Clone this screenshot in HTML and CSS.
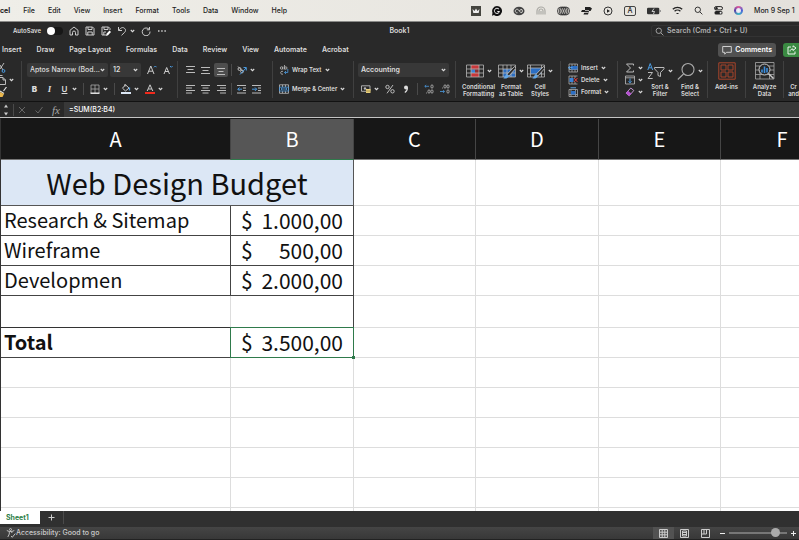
FILE: index.html
```html
<!DOCTYPE html>
<html lang="en">

<head>
    <meta charset="utf-8">
    <title>Book1</title>
    <link rel="stylesheet" href="styles.css">
</head>

<body>
    <!-- shared icons -->
    <svg class="defs" aria-hidden="true">
        <symbol id="chev" viewBox="0 0 5 4"><path d="M.8 1l1.700 1.700L4.200 1" fill="none" stroke="currentColor" stroke-width="1.100" /></symbol>
        <symbol id="lens" viewBox="0 0 10 10"><circle cx="4.200" cy="4.200" r="3" fill="none" stroke="currentColor" /><path d="M6.400 6.400L9.300 9.300" stroke="currentColor" /></symbol>
        <symbol id="brush" viewBox="0 0 18 18"><path d="M16.500 4.500L9 12.300l1.800 1.800L18 6.200z" fill="#2a2a2a" stroke="#ccc" stroke-width=".8" /><path d="M9.200 12.300c-2 .2-2 3-4 4 2.500.8 5.300 0 5.700-2.500z" fill="#63a8e8" /></symbol>
    </svg>

    <header class="menubar">
        <nav class="menus">
            <b>cel</b><a href="#">File</a><a href="#">Edit</a><a href="#">View</a><a href="#">Insert</a><a href="#">Format</a><a href="#">Tools</a><a href="#">Data</a><a href="#">Window</a><a href="#">Help</a>
        </nav>
        <div class="tray">
            <svg width="10" height="10" viewBox="0 0 10 10"><path d="M0 0h10v10H0z" fill="#45453f" /><path d="M1.500 3l2 2L5 2.500 6.500 5l2-2-.8 4H2.300z" fill="#eee" /></svg>
            <svg width="10" height="10" viewBox="0 0 10 10"><path d="M5 0a5 5 0 1 1-3 9l-2 .8.5-3A5 5 0 0 1 5 0z" fill="#111" /><path d="M7 3.200A2.600 2.600 0 1 0 7.500 5.500H5.300" fill="none" stroke="#eee" /></svg>
            <svg width="12" height="10" viewBox="0 0 12 10"><ellipse cx="6" cy="5" rx="5.500" ry="4.300" fill="#444" /><path d="M4.500 6.800a1.800 1.800 0 1 1 .7-3.200l2.300 2.800a1.500 1.500 0 1 0 0-2.800L6.500 5" fill="none" stroke="#e9e7e2" stroke-width=".8" /></svg>
            <svg width="10" height="10" viewBox="0 0 10 10"><path d="M1 8.500V5a4 4 0 0 1 8 0v3.500M3 8.500V5a2 2 0 0 1 4 0v3.500M5 5v3.500" fill="none" stroke="#aaa9a4" stroke-width="1.200" /></svg>
            <svg width="13" height="10" viewBox="0 0 13 10" fill="none" stroke="#333" stroke-width=".9"><ellipse cx="4" cy="5" rx="3.500" ry="4" /><ellipse cx="5.700" cy="5" rx="3.500" ry="4" /><ellipse cx="7.300" cy="5" rx="3.500" ry="4" /><ellipse cx="9" cy="5" rx="3.500" ry="4" /></svg>
            <svg width="11" height="10" viewBox="0 0 11 10"><path d="M4 1h5l2 1.500L9.500 5H8L7 8.500H2.500L3.500 6H0l1-2h3z" fill="#222" /><path d="M4 4.500h4M3 6.500h4.500" stroke="#e9e7e2" stroke-width=".7" /></svg>
            <svg width="10" height="10" viewBox="0 0 10 10"><circle cx="5" cy="5" r="4" fill="none" stroke="#333" /><path d="M4 3.200v3.600L7 5z" fill="#222" /></svg>
            <span class="input-lang">A</span>
            <svg width="14" height="8" viewBox="0 0 14 8"><rect x="0" y=".8" width="12.300" height="6.400" rx="1.300" fill="#333" /><path d="M13.200 3v2" stroke="#777" /><path d="M7 1.500L5 4.500h2.500L6.500 7" stroke="#eee" stroke-width=".8" fill="none" /></svg>
            <svg width="11" height="9" viewBox="0 0 11 9" fill="none" stroke="#222" stroke-width="1.300"><path d="M.8 3.300a6.800 6.800 0 0 1 9.400 0M2.600 5.300a4.200 4.200 0 0 1 5.800 0" /><path d="M5.500 7v1" stroke-width="2" /></svg>
            <svg width="9" height="9" class="dark"><use href="#lens" /></svg>
            <svg width="9" height="9" viewBox="0 0 9 9"><rect x=".5" y=".6" width="8" height="3.300" rx="1.600" fill="none" stroke="#222" /><circle cx="2.500" cy="2.200" r="1.200" fill="#222" /><rect x=".5" y="5" width="8" height="3.600" rx="1.600" fill="#222" /><circle cx="6.600" cy="6.800" r="1" fill="#eee" /></svg>
            <span class="siri"></span>
            <span class="clock">Mon 9 Sep 1</span>
        </div>
    </header>

    <div class="titlebar">
        <div class="quick">
            <label for="autosave">AutoSave</label>
            <input type="checkbox" id="autosave" class="toggle">
            <button aria-label="Home"><svg width="10" height="10" viewBox="0 0 10 10"><path d="M1 4.300L5 1l4 3.300V9H6.500V6.500a1.500 1.500 0 0 0-3 0V9H1z" /></svg></button>
            <button aria-label="Save"><svg width="10" height="10" viewBox="0 0 10 10"><path d="M1 1h6.500L9 2.500V9H1zM3 1v2.500h4V1M2.800 9V6h4.400v3" /></svg></button>
            <button aria-label="Save as"><svg width="10" height="10" viewBox="0 0 10 10"><path d="M5 9H1V1h6.500L9 2.500V4M3 1v2.500h4V1M2.800 9V6H5" /><path d="M5 10l.5-2.300L8.500 4.500l1.500 1.500-3 3.300z" fill="#fff" stroke="none" /></svg></button>
            <button aria-label="Undo"><svg width="10" height="10" viewBox="0 0 10 10"><path d="M1.500 1v3.500H5M1.800 4.300C4 1.300 6 1 7.500 2.300s1.300 3-.2 4.400L4.500 9.300" /></svg><svg class="chev"><use href="#chev" /></svg></button>
            <button aria-label="Redo"><svg width="10" height="10" viewBox="0 0 10 10"><path d="M8.500 1v2.800H5.800M8.300 3.600A3.900 3.900 0 1 0 9 5.500" /></svg></button>
            <button aria-label="More"><svg width="10" height="10" viewBox="0 0 10 10"><path d="M1 5h1.500M4.200 5h1.500M7.400 5h1.500" stroke-width="1.400" /></svg></button>
        </div>
        <span class="doc-name">Book1</span>
        <label class="search"><svg width="9" height="9"><use href="#lens" /></svg><input type="text" aria-label="Search" placeholder="Search (Cmd + Ctrl + U)"></label>
    </div>

    <div class="tabs">
        <nav>
            <a href="#">Insert</a><a href="#">Draw</a><a href="#">Page Layout</a><a href="#">Formulas</a><a href="#">Data</a><a href="#">Review</a><a href="#">View</a><a href="#">Automate</a><a href="#">Acrobat</a>
        </nav>
        <div class="tab-actions">
            <button class="comments"><svg width="10" height="10" viewBox="0 0 10 10"><path d="M.7 1.500h8.600v5.800H4.500L2.700 9.200V7.300h-2z" fill="none" stroke="#ddd" stroke-width=".9" /></svg>Comments</button>
            <button class="share" aria-label="Share"><svg width="10" height="10" viewBox="0 0 10 10" fill="none" stroke="#fff" stroke-width=".9"><path d="M4 2H1v7h7V6.500M3 6.500C3 4.500 4.500 4 6 4v1.500L9 3 6 .8v1.500" /></svg></button>
        </div>
    </div>

    <div class="ribbon">
        <div class="group clipboard three">
            <button aria-label="Cut"><svg width="6" height="10" viewBox="0 0 6 10"><path d="M0 6L4 0M0 2l3 5" stroke="#ccc" stroke-width=".9" /><circle cx="3.500" cy="8" r="1.400" fill="none" stroke="#4b9be0" /></svg></button>
            <button aria-label="Copy"><svg width="6" height="10" viewBox="0 0 6 10"><path d="M0 2.500h3L5.500 5v4.500H0M3 2.500V5h2.500M0 .5h2.500" fill="none" stroke="#ccc" stroke-width=".9" /></svg><svg class="chev"><use href="#chev" /></svg></button>
            <button aria-label="Format painter"><svg width="7" height="10" viewBox="0 0 7 10"><path d="M6.500 0L3.500 4M0 4l4 2.500" stroke="#ddd" stroke-width="1.200" /><path d="M0 5l4 2-1.500 3H0z" fill="#e8b64c" /></svg></button>
        </div>

        <div class="group font">
            <div class="row">
                <span class="pick pick-font"><select aria-label="Font"><option>Aptos Narrow (Bod...</option></select><svg class="chev"><use href="#chev" /></svg></span>
                <span class="pick pick-size"><select aria-label="Font size"><option>12</option></select><svg class="chev"><use href="#chev" /></svg></span>
                <button class="grow" aria-label="Increase font size"><svg width="10" height="10" viewBox="0 0 10 10"><path d="M.5 9L3.800 1 7 9M1.700 6.200h4.200" fill="none" stroke="#ccc" /><path d="M7 2.300l1.300-1.300 1.300 1.300" fill="none" stroke="#4b9be0" /></svg></button>
                <button class="grow" aria-label="Decrease font size"><svg width="10" height="10" viewBox="0 0 10 10"><path d="M1 9L3.700 2.500l2.800 6.500M2 6.500h3.500" fill="none" stroke="#ccc" /><path d="M7 1l1.300 1.300L9.600 1" fill="none" stroke="#4b9be0" /></svg></button>
            </div>
            <div class="row styles-row">
                <button class="letter"><b>B</b></button>
                <button class="letter"><i>I</i></button>
                <button class="letter"><u>U</u></button>
                <svg class="chev"><use href="#chev" /></svg>
                <span class="bar"></span>
                <button aria-label="Borders"><svg width="10" height="10" viewBox="0 0 10 10"><path d="M1 1h8v8M1 1v8M5 1v8M1 5h8" fill="none" stroke="#aaa" stroke-width=".8" /><path d="M.5 9.200h9" stroke="#fff" stroke-width="1.300" /></svg><svg class="chev"><use href="#chev" /></svg></button>
                <span class="bar"></span>
                <button aria-label="Fill colour"><svg width="10" height="10" viewBox="0 0 10 10"><path d="M4.500.8L8 4 4.500 7 1.500 4.200zM4 0v2.500" fill="none" stroke="#ddd" stroke-width=".9" /><path d="M8.500 3.500v3" stroke="#4b9be0" stroke-width="1.300" /><path d="M0 8h10v2H0z" fill="#dce7f5" /></svg><svg class="chev"><use href="#chev" /></svg></button>
                <button aria-label="Font colour"><svg width="10" height="10" viewBox="0 0 10 10"><path d="M2.200 7L5 .8 7.800 7M3.200 5h3.600" fill="none" stroke="#ccc" /><path d="M0 8h10v2H0z" fill="#f02a1c" /></svg><svg class="chev"><use href="#chev" /></svg></button>
            </div>
        </div>

        <div class="group align">
            <div class="row">
                <button aria-label="Top align"><svg width="10" height="10" viewBox="0 0 10 10"><path d="M0 1.500h9M1.500 4.500h6M0 7.500h9" /></svg></button>
                <button aria-label="Middle align"><svg width="10" height="10" viewBox="0 0 10 10"><path d="M0 2.500h9M1.500 5.500h6M0 8.500h9" /></svg></button>
                <button class="on" aria-label="Bottom align"><svg width="10" height="10" viewBox="0 0 10 10"><path d="M1 3.500h8M2.500 6.500h5M1 9.500h8" /></svg></button>
                <span class="bar"></span>
                <button aria-label="Orientation"><svg width="10" height="10" viewBox="0 0 10 10"><circle cx="2.500" cy="4" r="1.500" /><circle cx="5" cy="6.500" r="1.400" /><path d="M1 1.500l5 5" /><path d="M3 9.500L9 3M6.500 2.500H9.300V5.500" stroke="#4b9be0" /></svg><svg class="chev"><use href="#chev" /></svg></button>
            </div>
            <div class="row">
                <button aria-label="Align left"><svg width="10" height="10" viewBox="0 0 10 10"><path d="M0 1.500h9M0 4h6M0 6.500h9M0 9h6" /></svg></button>
                <button aria-label="Centre"><svg width="10" height="10" viewBox="0 0 10 10"><path d="M0 1.500h9M1.500 4h6M0 6.500h9M1.500 9h6" /></svg></button>
                <button aria-label="Align right"><svg width="10" height="10" viewBox="0 0 10 10"><path d="M1 1.500h9M4 4h6M1 6.500h9M4 9h6" /></svg></button>
                <span class="bar"></span>
                <button aria-label="Decrease indent"><svg width="10" height="10" viewBox="0 0 10 10"><path d="M0 1.500h9M6 4h3M6 6.500h3M0 9h9" /><path d="M5 5.200H.8M2.500 3.500L.8 5.200l1.700 1.700" stroke="#4b9be0" /></svg></button>
                <button aria-label="Increase indent"><svg width="10" height="10" viewBox="0 0 10 10"><path d="M0 1.500h9M6 4h3M6 6.500h3M0 9h9" /><path d="M0 5.200h4.500M3 3.500l1.700 1.700L3 6.900" stroke="#4b9be0" /></svg></button>
            </div>
        </div>

        <div class="group wrap">
            <div class="row"><button><svg width="10" height="10" viewBox="0 0 10 10" fill="none" stroke="#bbb" stroke-width=".8"><circle cx="2.500" cy="3" r="1.200" /><path d="M3.900 1.500v3M5.500 0v4.500" /><circle cx="6.800" cy="3" r="1.200" /><path d="M4 6.500a1.500 1.500 0 1 0 0 2.500" /><path d="M8.800 4v3.500H5.500M7 6L5.500 7.500 7 9" stroke="#4b9be0" /></svg>Wrap Text<svg class="chev"><use href="#chev" /></svg></button></div>
            <div class="row"><button><svg width="10" height="10" viewBox="0 0 10 10" fill="none" stroke="#bbb" stroke-width=".8"><path d="M.5.8h9v8.500h-9zM3.500.8V3M6.500.8V3M3.500 7.200v2M6.500 7.200v2" /><path d="M.5 3.200h9v3.800h-9zM2 5h6M3.300 4L2 5l1.300 1M6.700 4L8 5 6.700 6" stroke="#4b9be0" /></svg>Merge &amp; Center<svg class="chev"><use href="#chev" /></svg></button></div>
        </div>

        <div class="group number">
            <div class="row"><span class="pick pick-format"><select aria-label="Number format"><option>Accounting</option></select><svg class="chev"><use href="#chev" /></svg></span></div>
            <div class="row number-row">
                <button aria-label="Accounting format"><svg width="10" height="10" viewBox="0 0 10 10"><path d="M.5 1.800h8.500v5.500H.5z" fill="none" stroke="#bbb" stroke-width=".9" /><circle cx="4" cy="4.500" r="1.200" fill="#bbb" /><path d="M5 5h4.500v4H5z" fill="#e8cf7a" /><path d="M5 7h4.500" stroke="#8a7434" stroke-width=".6" /></svg><svg class="chev"><use href="#chev" /></svg></button>
                <button aria-label="Percent"><svg width="10" height="10" viewBox="0 0 10 10" fill="none" stroke="#ccc" stroke-width=".9"><circle cx="2.500" cy="3" r="1.700" /><circle cx="7.500" cy="7.300" r="1.700" /><path d="M8 1L2 9.300" /></svg></button>
                <button aria-label="Comma"><svg width="10" height="10" viewBox="0 0 10 10"><circle cx="5" cy="3.500" r="2" fill="#ddd" /><path d="M6.400 3.500C6.500 6 5.500 7.500 3.800 8.500" fill="none" stroke="#ddd" stroke-width="1.200" /></svg></button>
                <span class="bar"></span>
                <button aria-label="Increase decimal"><svg width="10" height="10" viewBox="0 0 10 10" fill="none" stroke="#bbb" stroke-width=".8"><path d="M5 2.300H.8M2.200 1L.8 2.300l1.400 1.300" stroke="#4b9be0" /><ellipse cx="8" cy="2.500" rx="1.100" ry="1.700" /><ellipse cx="5" cy="7.500" rx="1.100" ry="1.700" /><ellipse cx="8" cy="7.500" rx="1.100" ry="1.700" /><path d="M2 9h.9" /></svg></button>
                <button aria-label="Decrease decimal"><svg width="10" height="10" viewBox="0 0 10 10" fill="none" stroke="#bbb" stroke-width=".8"><path d="M0 7.500h4.500M3 6.200l1.400 1.300L3 8.800" stroke="#4b9be0" /><ellipse cx="5" cy="2.500" rx="1.100" ry="1.700" /><ellipse cx="8" cy="2.500" rx="1.100" ry="1.700" /><ellipse cx="8" cy="7.500" rx="1.100" ry="1.700" /><path d="M2 4h.9" /></svg></button>
            </div>
        </div>

        <div class="group looks">
            <button class="big"><span><svg width="18" height="18" viewBox="0 0 18 18"><path d="M5 3h8v4.500H5zM5 11h8v4H5z" fill="#c8373a" /><path d="M5 7.500h4V11H5z" fill="#3b82d6" /><path d="M9 7.500h4V11H9z" fill="#8f3032" /><path d="M.5 3h17v12H.5zM.5 7h17M.5 11h17M5 3v12M13 3v12" fill="none" stroke="#b5b5b5" stroke-width=".8" /></svg><svg class="chev"><use href="#chev" /></svg></span>Conditional<br>Formatting</button>
            <button class="big"><span><svg width="18" height="18" viewBox="0 0 18 18"><path d="M5 7h12v8H5z" fill="#2c6fc4" /><path d="M.5 3h17v12H.5zM.5 7h17M.5 11h17M5 3v12M9 3v12M13 3v12" fill="none" stroke="#b5b5b5" stroke-width=".8" /><use href="#brush" /></svg><svg class="chev"><use href="#chev" /></svg></span>Format<br>as Table</button>
            <button class="big"><span><svg width="18" height="18" viewBox="0 0 18 18"><path d="M3.500 6h11v6h-11z" fill="#2c6fc4" /><path d="M.5 3h17v12H.5zM.5 6h17M.5 12h17M3.500 3v12M14.500 3v12" fill="none" stroke="#b5b5b5" stroke-width=".8" /><use href="#brush" /></svg><svg class="chev"><use href="#chev" /></svg></span>Cell<br>Styles</button>
        </div>

        <div class="group cells three">
            <button><svg width="10" height="10" viewBox="0 0 10 10"><path d="M1 1h8.500v8H1zM1 6.500h8.500M4 1v8M7 1v8" fill="none" stroke="#aaa" stroke-width=".8" /><path d="M3 3h6.500v3.500H3z" fill="#2c6fc4" /><path d="M4.500 4.700H.5M2 3.200L.5 4.700 2 6.200" fill="none" stroke="#63a8e8" /></svg>Insert<svg class="chev"><use href="#chev" /></svg></button>
            <button><svg width="10" height="10" viewBox="0 0 10 10"><path d="M1 1h8.500M1 9h8.500M1 1v8M4 1v8M7 1v2M7 7v2" fill="none" stroke="#aaa" stroke-width=".8" /><path d="M1.500 3h4v4h-4z" fill="#3b82d6" /><path d="M6 3l3.500 4M9.500 3L6 7" stroke="#e0413e" /></svg>Delete<svg class="chev"><use href="#chev" /></svg></button>
            <button><svg width="10" height="10" viewBox="0 0 10 10"><path d="M1 2.500h8.500v7H1zM3 2.500v7M7.500 2.500v7M1 7.500h8.500" fill="none" stroke="#aaa" stroke-width=".8" /><path d="M3 4h4.500v3.500H3z" fill="#2c6fc4" /><path d="M2.500.8h5.500" stroke="#63a8e8" /></svg>Format<svg class="chev"><use href="#chev" /></svg></button>
        </div>

        <div class="group editing">
            <div class="three">
                <button aria-label="AutoSum"><svg width="10" height="10" viewBox="0 0 10 10"><path d="M8.500 2.500V1H1.500l4 4-4 4h7V7.500" fill="none" stroke="#bbb" /></svg><svg class="chev"><use href="#chev" /></svg></button>
                <button aria-label="Fill"><svg width="10" height="10" viewBox="0 0 10 10"><path d="M.5 1h9v8h-9zM.5 2.800h9" fill="none" stroke="#bbb" stroke-width=".8" /><path d="M5 3.500v4.300M3.500 6.300L5 7.800l1.500-1.500" fill="none" stroke="#4b9be0" /></svg><svg class="chev"><use href="#chev" /></svg></button>
                <button aria-label="Clear"><svg width="10" height="10" viewBox="0 0 10 10"><path d="M5.800 1l3 2.500-4.600 5.300-3.200-2.700z" fill="none" stroke="#cfa0dc" stroke-width=".9" /><path d="M3 3.800l3.300 2.800-2.100 2.400L1 6.200z" fill="#b44fd0" /></svg><svg class="chev"><use href="#chev" /></svg></button>
            </div>
            <button class="big"><span><svg width="18" height="18" viewBox="0 0 18 18" fill="none"><path d="M.8 8L3.200 1.500l2.500 6.500M1.600 5.800h3.300" stroke="#4b9be0" /><path d="M1 10.500h4.500L1 16.500h4.700" stroke="#bbb" /><path d="M7.500 5.500h9.500v1.300L13.500 10.500v4l-2.500-1v-3L7.500 6.800z" stroke="#bbb" /></svg><svg class="chev"><use href="#chev" /></svg></span>Sort &amp;<br>Filter</button>
            <button class="big"><span><svg width="18" height="18" viewBox="0 0 18 18" fill="none" stroke="#aaa" stroke-width="1.100"><circle cx="11" cy="7.500" r="6" /><path d="M6.500 12L.8 17.500" /></svg><svg class="chev"><use href="#chev" /></svg></span>Find &amp;<br>Select</button>
        </div>

        <div class="group single"><button class="big"><span><svg width="18" height="18" viewBox="0 0 18 18" fill="none" stroke="#a8452b"><path d="M.8.8h16.400v16.400H.8zM3 3h5v5H3zM10 3h5v5h-5zM3 10h5v5H3zM10 10h5v5h-5z" /></svg></span>Add-ins</button></div>
        <div class="group single"><button class="big"><span><svg width="20" height="18" viewBox="0 0 20 18" fill="none" stroke="#aaa"><path d="M.5.5h18.500v16.500H.5zM.5 4h18.500M.5 8h18.500M.5 12.500h18.500M5 4v13M14.500 12.500V17" stroke-width=".8" /><circle cx="9.500" cy="7.500" r="5.500" fill="#292929" stroke="#ccc" /><path d="M13.500 11.500l5 5" stroke="#ccc" stroke-width="1.400" /><path d="M7 7.500v3M9.500 4.500v6.500M12 6v4.500" stroke="#3b8fe0" stroke-width="1.600" /></svg></span>Analyze<br>Data</button></div>
        <div class="group last"><button class="big"><span></span>Cr<br>and</button></div>
    </div>

    <div class="formula-bar">
        <svg width="6" height="12" viewBox="0 0 6 12"><path d="M3 .5l2 3H1zM3 11.500l2-3H1z" fill="#ccc" /></svg>
        <span class="bar"></span>
        <button aria-label="Cancel"><svg width="8" height="8" viewBox="0 0 8 8"><path d="M1 1l6 6M7 1L1 7" stroke="#666" fill="none" /></svg></button>
        <button aria-label="Enter"><svg width="8" height="8" viewBox="0 0 8 8"><path d="M.5 4.500L3 7l4.500-6" stroke="#666" fill="none" /></svg></button>
        <button class="fx">fx</button>
        <input type="text" aria-label="Formula" value="=SUM(B2:B4)">
    </div>

    <main class="sheet">
        <table>
            <colgroup>
                <col class="col-a"><col class="col"><col class="col-narrow"><col class="col"><col class="col-narrow"><col class="col">
            </colgroup>
            <thead>
                <tr><th>A</th><th class="current">B</th><th>C</th><th>D</th><th>E</th><th>F</th></tr>
            </thead>
            <tbody>
                <tr class="title"><td colspan="2">Web Design Budget</td><td></td><td></td><td></td><td></td></tr>
                <tr class="item"><td>Research &amp; Sitemap</td><td><div class="money"><span>$</span><span>1.000,00</span></div></td><td></td><td></td><td></td><td></td></tr>
                <tr class="item"><td>Wireframe</td><td><div class="money"><span>$</span><span>500,00</span></div></td><td></td><td></td><td></td><td></td></tr>
                <tr class="item"><td>Developmen</td><td><div class="money"><span>$</span><span>2.000,00</span></div></td><td></td><td></td><td></td><td></td></tr>
                <tr class="spacer"><td></td><td></td><td></td><td></td><td></td><td></td></tr>
                <tr class="total"><td>Total</td><td class="selected"><div class="money"><span>$</span><span>3.500,00</span></div></td><td></td><td></td><td></td><td></td></tr>
                <tr><td></td><td></td><td></td><td></td><td></td><td></td></tr>
                <tr><td></td><td></td><td></td><td></td><td></td><td></td></tr>
                <tr><td></td><td></td><td></td><td></td><td></td><td></td></tr>
                <tr><td></td><td></td><td></td><td></td><td></td><td></td></tr>
                <tr><td></td><td></td><td></td><td></td><td></td><td></td></tr>
                <tr><td></td><td></td><td></td><td></td><td></td><td></td></tr>
            </tbody>
        </table>
    </main>

    <div class="sheet-tabs">
        <button class="sheet-tab">Sheet1</button>
        <button class="add" aria-label="New sheet"><svg width="7" height="7" viewBox="0 0 7 7"><path d="M3.500.5v6M.5 3.500h6" stroke="#ccc" /></svg></button>
    </div>

    <footer class="status">
        <svg width="10" height="10" viewBox="0 0 10 10" fill="none" stroke="#ccc" stroke-width=".9"><circle cx="4.500" cy="1.500" r="1" /><path d="M.8 2.500l2.500 1h2.500l2.500-1M3.300 3.500v2.500L1.800 9M5.800 3.500V5M5 8l1.300 1.300L9.300 5.500" /></svg>
        <span>Accessibility: Good to go</span>
        <div class="views">
            <button class="on" aria-label="Normal"><svg width="9" height="9" viewBox="0 0 9 9"><path d="M.5.5h8v8h-8zM.5 3.200h8M.5 5.800h8M3.200.5v8M5.800.5v8" /></svg></button>
            <button aria-label="Page layout"><svg width="9" height="9" viewBox="0 0 9 9"><path d="M.5.5h8v8h-8zM2.500 2h4v5h-4zM3 3.500h3M3 5.500h3" /></svg></button>
            <button aria-label="Page break"><svg width="9" height="9" viewBox="0 0 9 9"><path d="M.5.5h8v8h-8zM3 .5V5M5.500.5V5h-5" /></svg></button>
        </div>
        <div class="zoom">
            <button aria-label="Zoom out"><svg width="5" height="5" viewBox="0 0 5 5"><path d="M0 2.500h5" stroke="#eee" /></svg></button>
            <input type="range" aria-label="Zoom" min="0" max="100" value="85">
            <button aria-label="Zoom in"><svg width="5" height="5" viewBox="0 0 5 5"><path d="M0 2.500h5M2.500 0v5" stroke="#eee" /></svg></button>
        </div>
    </footer>
</body>

</html>
```
FILE: styles.css
```css
* {
    box-sizing: border-box;
}

body {
    margin: 0;
    height: 100vh;
    display: flex;
    flex-direction: column;
    overflow: hidden;
    background: #292929;
    color: #dcdcdc;
    font-family: Inter, "Liberation Sans", sans-serif;
    font-size: 7px;
    font-weight: 500;
    line-height: 10px;
}

a {
    color: inherit;
    text-decoration: none;
}

button {
    display: flex;
    align-items: center;
    gap: 3px;
    padding: 0;
    border: none;
    background: none;
    color: inherit;
    font: inherit;
    white-space: nowrap;
}

input,
select {
    border: none;
    background: none;
    color: inherit;
    font: inherit;
    padding: 0;
    outline: none;
}

svg {
    flex: none;
    display: block;
}

.defs {
    position: absolute;
    width: 0;
    height: 0;
}

.chev {
    width: 5px;
    height: 4px;
}

.bar {
    width: 1px;
    height: 12px;
    background: #4a4a4a;
}

/* system menu bar */
.menubar {
    flex: none;
    height: 22px;
    display: flex;
    align-items: center;
    justify-content: space-between;
    background: linear-gradient(90deg, #efeee8, #e4e1dc);
    border-bottom: 1px solid #8a8a88;
    color: #222;
}

.menus,
.tray {
    display: flex;
    align-items: center;
}

.menus {
    gap: 13px;
}

.menus b {
    font-weight: 700;
}

.tray {
    gap: 11px;
}

.dark {
    color: #222;
}

.input-lang {
    width: 12px;
    height: 10px;
    border: 1px solid #444;
    border-radius: 2px;
    line-height: 8px;
    text-align: center;
}

.siri {
    width: 9px;
    height: 9px;
    border-radius: 50%;
    border: 2px solid transparent;
    background: radial-gradient(#f4f4f8, #d8d8ec) padding-box, conic-gradient(#e05a9a, #4a62d8, #3fb9c4, #5a3fa8, #e05a9a) border-box;
}

.clock {
    width: 45px;
    white-space: nowrap;
}

/* title bar */
.titlebar {
    flex: none;
    height: 18px;
    display: grid;
    grid-template-columns: 1fr auto 1fr;
    align-items: center;
    font-weight: 600;
}

.quick {
    display: flex;
    align-items: center;
    gap: 6px;
    padding-left: 13px;
}

.quick label {
    font-size: 6px;
}

.quick svg:not(.chev) {
    fill: none;
    stroke: #ccc;
}

.toggle {
    appearance: none;
    width: 16px;
    height: 8px;
    margin: 0;
    border-radius: 4px;
    background: #171717;
}

.toggle::before {
    content: "";
    display: block;
    width: 8px;
    height: 8px;
    border-radius: 50%;
    background: #fff;
}

.search {
    justify-self: end;
    width: 148px;
    height: 12px;
    display: flex;
    align-items: center;
    gap: 3px;
    padding-left: 3px;
    border: 1px solid #333;
    border-right: none;
    border-radius: 3px 0 0 3px;
    color: #aaa;
}

.search input {
    flex: 1;
    min-width: 0;
}

.search input::placeholder {
    color: #b0b0b0;
}

/* ribbon tabs */
.tabs {
    flex: none;
    height: 20px;
    display: flex;
    align-items: center;
    justify-content: space-between;
    font-weight: 600;
}

.tabs nav {
    display: flex;
    gap: 15px;
    padding-left: 2px;
}

.tab-actions {
    display: flex;
    gap: 7px;
}

.comments,
.share {
    height: 14px;
    padding: 0 4px;
    border-radius: 3px;
    background: #515151;
    color: #fff;
}

.share {
    padding-right: 2px;
    border-radius: 3px 0 0 3px;
    background: #3a8a42;
}

/* ribbon */
.ribbon {
    flex: none;
    height: 42px;
    display: flex;
    padding-top: 1px;
    overflow: hidden;
    border-bottom: 1px solid #121212;
    font-weight: 600;
}

.group {
    flex: none;
    height: 37px;
    display: flex;
    flex-direction: column;
    gap: 3px;
    padding-top: 1px;
    border-right: 1px solid #404040;
}

.row {
    height: 16px;
    display: flex;
    align-items: center;
    gap: 5px;
}

.three {
    display: flex;
    flex-direction: column;
    gap: 1px;
}

.three button {
    height: 12px;
}

.clipboard {
    width: 22px;
}

.font {
    width: 156px;
    padding-left: 5px;
}

.font .row:first-child {
    gap: 2px;
}

.pick {
    display: flex;
    align-items: center;
    height: 14px;
    padding: 0 3px;
    border-radius: 2px;
    background: #383838;
}

.pick select {
    flex: 1;
    min-width: 0;
    appearance: none;
}

.pick-font {
    width: 81px;
    font-weight: 500;
}

.pick-size {
    width: 31px;
}

.pick-format {
    width: 91px;
}

.grow {
    margin-left: 4px;
}

.font .styles-row {
    gap: 6px;
    padding-left: 3px;
}

.letter {
    width: 9px;
    justify-content: center;
    font-size: 8px;
}

.letter + .chev {
    margin-left: -3px;
}

.letter i {
    font-family: "Liberation Serif", serif;
    font-size: 9px;
}

.align {
    width: 95px;
    padding-left: 8px;
}

.align svg:not(.chev) {
    fill: none;
    stroke: #bbb;
    stroke-width: 1px;
}

.align .on {
    height: 14px;
    padding: 0 2px;
    margin: 0 -2px;
    border-radius: 2px;
    background: #4d4d4d;
}

.wrap {
    width: 81px;
    padding-left: 6px;
}

.wrap,
.cells {
    font-size: 6px;
}

.number {
    width: 102px;
    padding-left: 4px;
}

.number .number-row {
    gap: 6px;
    padding-left: 3px;
}

.looks {
    width: 105px;
    flex-direction: row;
    gap: 3px;
    padding-left: 6px;
}

.cells {
    width: 57px;
    padding-left: 7px;
    gap: 1px;
}

.editing {
    width: 90px;
    flex-direction: row;
    gap: 4px;
    padding-left: 7px;
}

.big {
    flex-direction: column;
    gap: 3px;
    font-size: 6px;
    line-height: 7px;
}

.big span {
    height: 18px;
    display: flex;
    align-items: center;
    gap: 3px;
}

.single {
    width: 38px;
    align-items: center;
}

.last {
    flex: 1;
    align-items: flex-end;
    border: none;
}

/* formula bar */
.formula-bar {
    flex: none;
    height: 16px;
    display: flex;
    align-items: center;
    gap: 9px;
    padding-left: 3px;
    border-bottom: 1px solid #c4c4c4;
}

.formula-bar .bar {
    margin: 0 -5px;
}

.fx {
    font-family: "Liberation Serif", serif;
    font-size: 11px;
    font-style: italic;
    color: #aaa;
}

.formula-bar input {
    flex: 1;
    height: 15px;
    padding-left: 5px;
    margin-left: -5px;
    background: #383838;
    color: #fff;
}

/* worksheet */
.sheet {
    flex: 1;
    min-height: 0;
    overflow: hidden;
    background: #fff;
    border-top: 1px solid #171717;
    border-left: 1px solid #333;
    color: #111;
    font-family: "Noto Sans CJK SC", "Noto Sans", sans-serif;
    font-size: 20px;
    font-weight: 400;
    line-height: 26px;
}

table {
    width: 842px;
    table-layout: fixed;
    border-collapse: separate;
    border-spacing: 0;
}

.col-a {
    width: 230px;
}

.col {
    width: 123px;
}

.col-narrow {
    width: 122px;
}

th {
    height: 41px;
    padding: 0;
    background: #171717;
    border-right: 1px solid #454545;
    border-bottom: 1px solid #777;
    color: #fff;
    font-weight: 400;
}

th.current {
    background: #565656;
    border-bottom-color: #2f7a4b;
}

td {
    height: 30px;
    padding: 0 3px 2px;
    border-right: 1px solid #ddd;
    border-bottom: 1px solid #ddd;
    white-space: nowrap;
}

.title td {
    height: 46px;
}

.title td:first-child {
    background: #dce7f5;
    border-color: #555;
    font-size: 29px;
    line-height: 40px;
    text-align: center;
}

.item td:nth-child(-n+2),
.total td:nth-child(-n+2) {
    border-color: #444;
}

.spacer td {
    height: 32px;
}

.spacer td:first-child {
    border-bottom-color: #333;
}

.spacer td:nth-child(2) {
    border-right-color: #444;
}

.total td:first-child {
    font-weight: 700;
}

td.selected {
    position: relative;
}

/* selection frame and fill handle */
.selected::before,
.selected::after {
    content: "";
    position: absolute;
    border: 1px solid #2f7a4b;
}

.selected::before {
    inset: -1px;
}

.selected::after {
    right: -2px;
    bottom: -2px;
    width: 1px;
    height: 1px;
    background: #2f7a4b;
}

.money {
    display: flex;
    justify-content: space-between;
    padding: 0 7px;
    font-size: 21px;
}

/* sheet tabs and status bar */
.sheet-tabs {
    flex: none;
    height: 16px;
    display: flex;
    align-items: flex-start;
    background: #303030;
}

.sheet-tab {
    height: 13px;
    padding: 0 11px 0 6px;
    background: #fff;
    color: #2f8048;
    font-weight: 700;
}

.add {
    height: 13px;
    padding: 0 8px;
    border-right: 1px solid #4a4a4a;
}

.status {
    flex: none;
    height: 13px;
    display: flex;
    align-items: center;
    padding: 0 3px 0 6px;
    background: linear-gradient(#454545, #383838);
    border-bottom: 1px solid #222;
    color: #ccc;
}

.views {
    display: flex;
    margin-left: auto;
}

.views button {
    width: 21px;
    height: 12px;
    justify-content: center;
}

.views .on {
    background: #525252;
}

.views svg {
    fill: none;
    stroke: #ccc;
    stroke-width: 1px;
}

.zoom {
    display: flex;
    align-items: center;
    gap: 4px;
    padding-left: 4px;
}

.zoom input {
    appearance: none;
    width: 58px;
    height: 10px;
    margin: 0;
}

.zoom input::-webkit-slider-runnable-track {
    height: 2px;
    background: #777;
}

.zoom input::-webkit-slider-thumb {
    appearance: none;
    width: 9px;
    height: 9px;
    margin-top: -4px;
    border-radius: 50%;
    background: #aaa;
}
```
